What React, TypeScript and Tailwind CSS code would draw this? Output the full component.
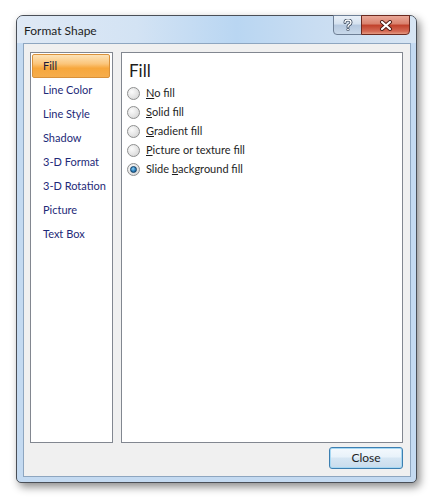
import React, { useState } from 'react';

const categories = [
  'Fill',
  'Line Color',
  'Line Style',
  'Shadow',
  '3-D Format',
  '3-D Rotation',
  'Picture',
  'Text Box',
];

// label split into [before, accessKey, after]
const fillOptions: [string, string, string][] = [
  ['', 'N', 'o fill'],
  ['', 'S', 'olid fill'],
  ['', 'G', 'radient fill'],
  ['', 'P', 'icture or texture fill'],
  ['Slide ', 'b', 'ackground fill'],
];

const Radio: React.FC<{ checked: boolean }> = ({ checked }) => (
  <span className="relative flex h-[13px] w-[13px] shrink-0 items-center justify-center rounded-full border border-[#8e8f8f] bg-[radial-gradient(circle_at_35%_35%,#fbfbfb_0%,#e4e4e4_55%,#cfcfcf_100%)]">
    {checked && (
      <span className="h-[7px] w-[7px] rounded-full border border-[#0f3d63] bg-[radial-gradient(circle_at_40%_35%,#8fd0f5_0%,#2f85c2_50%,#124e80_100%)]" />
    )}
  </span>
);

const App: React.FC = () => {
  const [selected, setSelected] = useState('Fill');
  const [fill, setFill] = useState(4);

  return (
    <div
      className="h-[502px] w-[433px] bg-white pl-[16px] pt-[15px]"
      style={{ fontFamily: '"Segoe UI", Lato, "Noto Sans", sans-serif' }}
    >
      <div className="flex h-[468px] w-[401px] flex-col rounded-t-[7px] rounded-b-[5px] border border-[#4a4f57] bg-[#c4daf1] shadow-[3px_4px_9px_rgba(0,0,0,0.45)]">
        {/* title bar */}
        <div className="flex h-[28px] items-start justify-between rounded-t-[6px] bg-[linear-gradient(90deg,#dfe9f5_0%,#d3e3f4_30%,#b9d6f2_55%,#c9ddf2_75%,#d7e5f3_100%)]">
          <span className="ml-[7px] mt-[7px] text-[12px] leading-[16px] text-[#1e1e1e]">Format Shape</span>
          <div className="-mt-px mr-[6px] flex h-[20px]">
            <button className="flex w-[29px] items-center justify-center rounded-bl-[4px] border border-[#6e7f95] bg-[linear-gradient(180deg,#e9f0f8_0%,#d4e1ef_45%,#b5c8df_50%,#c9d9ea_100%)]">
              <svg width="10" height="12" viewBox="0 0 10 12">
                <path d="M2 3.5 Q2 1 5 1 Q8 1 8 3.5 Q8 5 6 6 Q5 6.6 5 8" fill="none" stroke="#3b4a5e" strokeWidth="3" strokeLinecap="round" />
                <path d="M2 3.5 Q2 1 5 1 Q8 1 8 3.5 Q8 5 6 6 Q5 6.6 5 8" fill="none" stroke="#ffffff" strokeWidth="1.4" strokeLinecap="round" />
                <circle cx="5" cy="10.6" r="1.3" fill="#ffffff" stroke="#3b4a5e" strokeWidth="0.8" />
              </svg>
            </button>
            <button className="-ml-px flex w-[49px] items-center justify-center rounded-br-[4px] border border-[#6b2a20] bg-[linear-gradient(180deg,#eaa898_0%,#d9806c_45%,#c0402a_50%,#d46a55_85%,#e49a82_100%)]">
              <svg width="14" height="11" viewBox="0 0 14 11">
                <path d="M3 2 L11 9 M11 2 L3 9" stroke="#4a1a12" strokeWidth="4" strokeLinecap="round" />
                <path d="M3 2 L11 9 M11 2 L3 9" stroke="#ffffff" strokeWidth="2.2" strokeLinecap="round" />
              </svg>
            </button>
          </div>
        </div>

        {/* client area */}
        <div className="mb-[5px] ml-[6px] mr-[5px] flex flex-1 flex-col border border-[#8ea6c0] bg-[#f0f0f0] pb-[7px] pl-[6px] pr-[7px] pt-[8px]">
          <div className="flex h-[391px] gap-[8px]">
            {/* category list */}
            <ul className="w-[83px] shrink-0 border border-[#828790] bg-white pl-px pr-[2px] pt-px">
              {categories.map(cat => (
                <li
                  key={cat}
                  onClick={() => setSelected(cat)}
                  className={
                    cat === selected
                      ? 'flex h-[24px] items-center whitespace-nowrap rounded-[2px] border border-[#d9913a] bg-[linear-gradient(180deg,#fde3b8_0%,#fbc57a_40%,#f7a73c_60%,#f6ad4c_100%)] pl-[10px] text-[11px] text-[#1b1b3a]'
                      : 'flex h-[24px] items-center whitespace-nowrap pl-[11px] text-[11px] text-[#1e2a78]'
                  }
                >
                  {cat}
                </li>
              ))}
            </ul>

            {/* options panel */}
            <div className="flex-1 border border-[#828790] bg-white pl-[5px] pt-[6px]">
              <h2 className="ml-[2px] text-[17px] leading-[24px] text-[#1e1e1e]">Fill</h2>
              <div className="mt-[1px] flex flex-col">
                {fillOptions.map(([pre, key, post], i) => (
                  <label
                    key={i}
                    onClick={() => setFill(i)}
                    className="flex h-[19px] items-center gap-[6px] whitespace-nowrap text-[11px] text-[#1e1e1e]"
                  >
                    <Radio checked={fill === i} />
                    <span>
                      {pre}
                      <span className="underline underline-offset-1">{key}</span>
                      {post}
                    </span>
                  </label>
                ))}
              </div>
            </div>
          </div>

          <div className="mt-[4px] flex justify-end">
            <button className="h-[22px] w-[74px] rounded-[3px] border border-[#3c7fb1] bg-[linear-gradient(180deg,#f4f9fd_0%,#e8f2fa_45%,#d6e6f3_50%,#c9dcec_100%)] text-[12px] text-[#1e1e1e] shadow-[inset_0_0_0_1px_#a7d8f3]">
              Close
            </button>
          </div>
        </div>
      </div>
    </div>
  );
};

export default App;
